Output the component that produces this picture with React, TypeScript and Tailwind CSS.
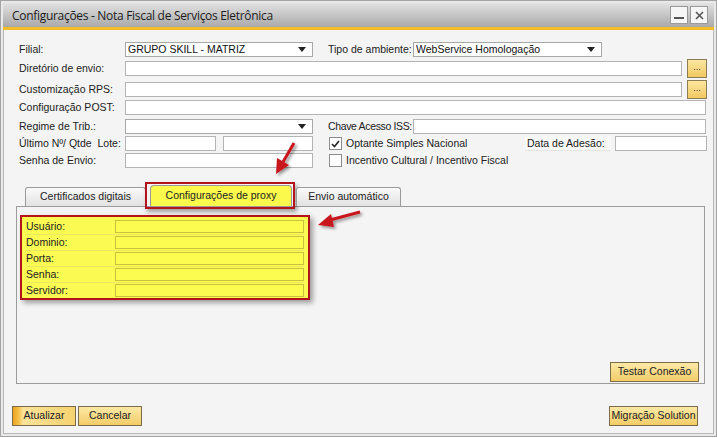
import React from 'react';

const font = "font-['Liberation_Sans',Arial,sans-serif]";

const Input = ({ className = '' }: { className?: string }) => (
  <div className={`shrink-0 h-[15px] bg-white border border-[#b4b4b4] ${className}`} />
);

const Select = ({ value = '', className = '' }: { value?: string; className?: string }) => (
  <div className={`shrink-0 h-[15px] bg-white border border-[#a8a8a8] flex items-center pl-[2px] pr-[6px] ${className}`}>
    <span className="flex-1 text-[10.5px] leading-none text-[#111] whitespace-nowrap overflow-hidden">{value}</span>
    <svg width="8" height="5" viewBox="0 0 8 5"><path d="M0 0h8L4 5z" fill="#222" /></svg>
  </div>
);

const Label = ({ children, className = '' }: { children: React.ReactNode; className?: string }) => (
  <span className={`shrink-0 text-[10.5px] leading-none text-[#222] whitespace-nowrap ${className}`}>{children}</span>
);

const DotsButton = () => (
  <div className="w-[20px] h-[19px] border border-[#8a7c54] bg-gradient-to-b from-[#fbe7a0] to-[#f2c860] flex items-center justify-center text-[9px] leading-none text-[#333] pb-[3px]">
    ...
  </div>
);

const Check = ({ checked }: { checked?: boolean }) => (
  <div className="w-[13px] h-[13px] bg-white border border-[#8c8c8c] flex items-center justify-center">
    {checked && (
      <svg width="9" height="8" viewBox="0 0 9 8">
        <path d="M1 4l2.5 2.5L8 1" stroke="#222" strokeWidth="1.6" fill="none" />
      </svg>
    )}
  </div>
);

const YellowButton = ({ children, className = '', primary }: { children: React.ReactNode; className?: string; primary?: boolean }) => (
  <div
    className={`shrink-0 h-[20px] border border-[#7a6c48] flex items-center justify-center text-[10.5px] whitespace-nowrap text-[#222] ${
      primary
        ? 'bg-[linear-gradient(90deg,#eea21c_0px,#f5c24a_6px,#fbe39a_10px,#f6d270_100%)]'
        : 'bg-gradient-to-b from-[#fce9a6] to-[#f3cc66]'
    } ${className}`}
  >
    {children}
  </div>
);

const Tab = ({ children, className = '' }: { children: React.ReactNode; className?: string }) => (
  <div className={`shrink-0 h-[19px] border border-b-0 border-[#9a9a9a] rounded-t-[3px] bg-gradient-to-b from-[#fafafa] to-[#e2e2e2] flex items-center justify-center text-[10.5px] whitespace-nowrap text-[#222] ${className}`}>
    {children}
  </div>
);

const proxyFields = ['Usuário:', 'Dominio:', 'Porta:', 'Senha:', 'Servidor:'];

export default function App() {
  return (
    <div className={`w-[717px] h-[438px] bg-white relative ${font}`}>
      <div className="w-[717px] h-[437px] border border-[#a4a4a4] bg-[#e9e9e9] p-[2px] flex flex-col">
        {/* title bar */}
        <div className="h-[24px] bg-gradient-to-b from-[#e2e2e2] to-[#a9a9a9] flex items-center pl-[9px] pr-[6px]">
          <span className="flex-1 text-[12px] text-[#1c1c1c] font-['Open_Sans',sans-serif] tracking-[-0.3px] pt-[1px]">
            Configurações - Nota Fiscal de Serviços Eletrônica
          </span>
          <div className="w-[18px] h-[18px] bg-[#f6f6f6] border border-[#9a9a9a] flex items-end justify-center pb-[4px]">
            <div className="w-[10px] h-[2px] bg-[#555]" />
          </div>
          <div className="w-[18px] h-[18px] ml-[2px] bg-[#f6f6f6] border border-[#9a9a9a] flex items-center justify-center">
            <svg width="9" height="9" viewBox="0 0 9 9">
              <path d="M1 1l7 7M8 1L1 8" stroke="#555" strokeWidth="1.6" />
            </svg>
          </div>
        </div>
        <div className="h-[3px] bg-[#f1bd2a]" />

        {/* body */}
        <div className="flex-1 bg-[#f4f4f4] border border-t-0 border-[#b8b8b8] px-[12px] flex flex-col">
          <div className="pl-[3px] flex flex-col">
            {/* row 1 */}
            <div className="mt-[12px] h-[15px] flex items-center">
              <Label className="w-[106px]">Filial:</Label>
              <Select value="GRUPO SKILL - MATRIZ" className="w-[188px]" />
              <Label className="ml-[15px] w-[85px]">Tipo de ambiente:</Label>
              <Select value="WebService Homologação" className="w-[189px]" />
            </div>
            {/* row 2 */}
            <div className="mt-[2px] h-[19px] flex items-center">
              <Label className="w-[106px]">Diretório de envio:</Label>
              <Input className="w-[557px]" />
              <div className="ml-[5px]"><DotsButton /></div>
            </div>
            {/* row 3 */}
            <div className="mt-[2px] h-[19px] flex items-center">
              <Label className="w-[106px]">Customização RPS:</Label>
              <Input className="w-[557px]" />
              <div className="ml-[5px]"><DotsButton /></div>
            </div>
            {/* row 4 */}
            <div className="mt-[1px] h-[15px] flex items-center">
              <Label className="w-[106px]">Configuração POST:</Label>
              <Input className="w-[581px]" />
            </div>
            {/* row 5 */}
            <div className="mt-[4px] h-[15px] flex items-center">
              <Label className="w-[106px]">Regime de Trib.:</Label>
              <Select className="w-[188px]" />
              <Label className="ml-[15px] w-[85px] tracking-[-0.35px]">Chave Acesso ISS:</Label>
              <Input className="w-[293px]" />
            </div>
            {/* row 6 */}
            <div className="mt-[2px] h-[15px] flex items-center">
              <Label className="w-[106px]">Último Nº/ Qtde&nbsp; Lote:</Label>
              <Input className="w-[91px]" />
              <Input className="ml-[7px] w-[90px]" />
              <div className="ml-[16px]"><Check checked /></div>
              <Label className="ml-[4px] w-[179px]">Optante Simples Nacional</Label>
              <div className="shrink-0 w-[86px] h-[15px] mr-[4px] bg-[#f8f8f8] border-b border-[#e4e4e4] flex items-center pl-[2px]">
                <Label>Data de Adesão:</Label>
              </div>
              <Input className="w-[92px]" />
            </div>
            {/* row 7 */}
            <div className="mt-[2px] h-[15px] flex items-center">
              <Label className="w-[106px]">Senha de Envio:</Label>
              <Input className="w-[188px]" />
              <div className="ml-[16px]"><Check /></div>
              <Label className="ml-[4px]">Incentivo Cultural / Incentivo Fiscal</Label>
            </div>
          </div>

          {/* tabs */}
          <div className="mt-[14px] h-[24px] flex items-end pl-[9px] relative z-10">
            <Tab className="w-[121px]">Certificados digitais</Tab>
            <div className="shrink-0 -ml-[1px] w-[150px] h-[27px] -mb-[3px] border-2 border-[#b3141a] shadow-[2px_3px_4px_rgba(0,0,0,0.35)] flex items-end pl-[3px] pr-[1px]">
              <div className="w-full h-[21px] border border-b-0 border-[#9a9a9a] rounded-t-[4px] bg-[#fbf94c] flex items-center justify-center text-[10.5px] whitespace-nowrap text-[#222] mb-[1px]">
                Configurações de proxy
              </div>
            </div>
            <Tab className="ml-[1px] w-[105px]">Envio automático</Tab>
          </div>

          {/* tab panel */}
          <div className="w-[689px] h-[178px] border border-[#9c9c9c] bg-[#f4f4f4] flex flex-col pl-[3px] pt-[8px] pr-[5px] pb-[1px]">
            <div className="w-[290px] h-[85px] border-2 border-[#b3141a] bg-[#fafa52] shadow-[3px_3px_5px_rgba(0,0,0,0.35)] flex flex-col pt-[1px] pl-[4px] pr-[4px]">
              {proxyFields.map((f, i) => (
                <div key={f} className={`h-[16px] flex items-center ${i > 0 ? 'border-t border-[#eaea60]' : ''}`}>
                  <Label className="w-[89px]">{f}</Label>
                  <div className="w-[190px] h-[13px] border border-[#c9c33c] bg-[#fbfb50]" />
                </div>
              ))}
            </div>
            <div className="mt-auto flex justify-end">
              <YellowButton className="w-[89px]">Testar Conexão</YellowButton>
            </div>
          </div>

          {/* footer */}
          <div className="mt-[22px] -ml-[4px] flex items-center">
            <YellowButton primary className="w-[64px]">Atualizar</YellowButton>
            <YellowButton className="ml-[2px] w-[64px]">Cancelar</YellowButton>
            <div className="flex-1" />
            <YellowButton className="w-[89px] mr-[3px]">Migração Solution</YellowButton>
          </div>
        </div>
      </div>

      {/* red annotation arrows */}
      <svg className="absolute left-0 top-0 pointer-events-none" width="717" height="438">
        <defs>
          <filter id="sh" x="-50%" y="-50%" width="200%" height="200%">
            <feDropShadow dx="2" dy="2" stdDeviation="1.5" floodColor="#000" floodOpacity="0.4" />
          </filter>
        </defs>
        <g filter="url(#sh)" fill="#c8161c" stroke="#c8161c">
          <line x1="294" y1="143" x2="283" y2="162" strokeWidth="3" />
          <path d="M276 174 L277 158 L289 165 Z" stroke="none" />
          <line x1="360" y1="212" x2="330" y2="220" strokeWidth="3" />
          <path d="M318 225 L331 214 L334 227 Z" stroke="none" />
        </g>
      </svg>
    </div>
  );
}
